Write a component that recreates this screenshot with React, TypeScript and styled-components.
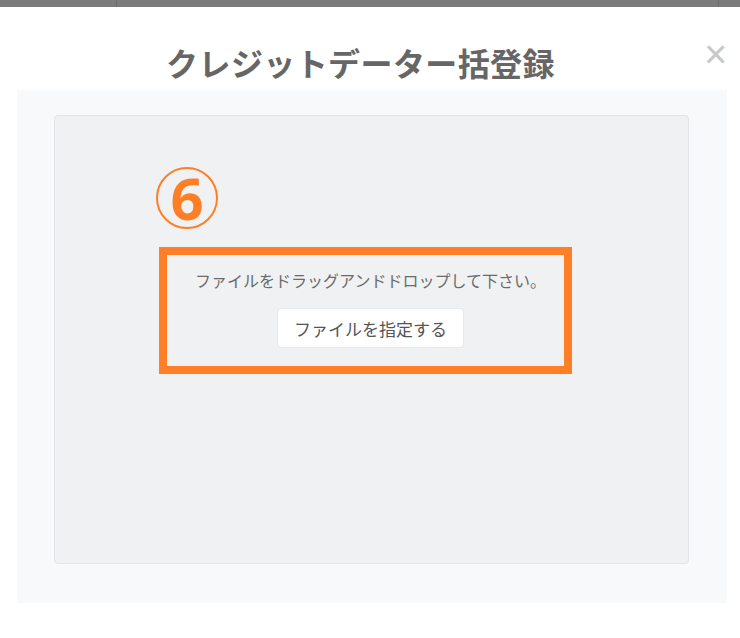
import React from "react";
import styled, { createGlobalStyle } from "styled-components";

const Global = createGlobalStyle`
  html, body { margin: 0; padding: 0; background: #ffffff; }
  body { font-family: "Noto Sans CJK JP", "Noto Sans", sans-serif; }
  * { box-sizing: border-box; }
`;

const Page = styled.div`
  width: 740px;
  height: 638px;
  display: flex;
  flex-direction: column;
  overflow: hidden;
`;

const Backdrop = styled.div`
  height: 7px;
  display: flex;
  background: #7b7b7b;
`;

const BackdropCell = styled.div<{ $w?: number }>`
  ${(p) => (p.$w ? `width: ${p.$w}px;` : "flex: 1;")}
  border-right: 1px solid #6c6c6c;
  &:last-child { border-right: none; }
`;

const Modal = styled.div`
  flex: 1;
  background: #ffffff;
  display: flex;
  flex-direction: column;
`;

const Header = styled.div`
  display: flex;
  align-items: center;
  padding: 36px 14px 9px 17px;
`;

const Title = styled.h1`
  flex: 1;
  margin: 0;
  text-align: center;
  font-size: 32px;
  letter-spacing: 0.4px;
  line-height: 38px;
  font-weight: 700;
  color: #666666;
  font-family: "Noto Sans CJK JP", sans-serif;
`;

const Close = styled.button`
  align-self: flex-start;
  margin-top: 0;
  width: 22px;
  height: 22px;
  padding: 0;
  border: none;
  background: transparent;
  font-family: "Liberation Sans", Arial, sans-serif;
  font-size: 40px;
  font-weight: 400;
  line-height: 22px;
  color: #c8c8c8;
  text-align: center;
  overflow: visible;
  cursor: pointer;
`;

const Body = styled.div`
  margin: 0 13px 0 17px;
  padding: 25px 38px 39px 37px;
  background: #f8f9fa;
`;

const DropZone = styled.div`
  height: 449px;
  border: 1px solid #e2e4e7;
  border-radius: 4px;
  background: #f0f1f3;
  padding: 51px 0 0 101px;
  display: flex;
  flex-direction: column;
  align-items: flex-start;
`;

const Circled = styled.div`
  width: 62px;
  height: 62px;
  border: 2px solid #ff7f27;
  border-radius: 50%;
  display: flex;
  align-items: center;
  justify-content: center;
  color: #ff7f27;
  font-family: "Noto Sans", sans-serif;
  font-weight: 700;
  font-size: 58px;
  line-height: 1;
`;

const Highlight = styled.div`
  margin: 18px 0 0 3px;
  width: 413px;
  height: 127px;
  border: 8px solid #ff7f27;
  padding: 13px 0 0 10px;
  display: flex;
  flex-direction: column;
  align-items: center;
`;

const Prompt = styled.p`
  margin: 0;
  font-size: 16px;
  line-height: 24px;
  color: #6a6a6a;
  white-space: nowrap;
`;

const PickButton = styled.button`
  margin-top: 16px;
  height: 40px;
  padding: 0 16px;
  background: #ffffff;
  border: 1px solid #e6e8eb;
  border-radius: 4px;
  font-family: "Noto Sans CJK JP", sans-serif;
  font-size: 17px;
  color: #555555;
  cursor: pointer;
`;

export default function App() {
  return (
    <>
      <Global />
      <Page>
        <Backdrop>
          <BackdropCell $w={117} />
          <BackdropCell $w={602} />
          <BackdropCell />
        </Backdrop>
        <Modal>
          <Header>
            <Title>クレジットデーター括登録</Title>
            <Close aria-label="閉じる">×</Close>
          </Header>
          <Body>
            <DropZone>
              <Circled>6</Circled>
              <Highlight>
                <Prompt>ファイルをドラッグアンドドロップして下さい。</Prompt>
                <PickButton>ファイルを指定する</PickButton>
              </Highlight>
            </DropZone>
          </Body>
        </Modal>
      </Page>
    </>
  );
}
